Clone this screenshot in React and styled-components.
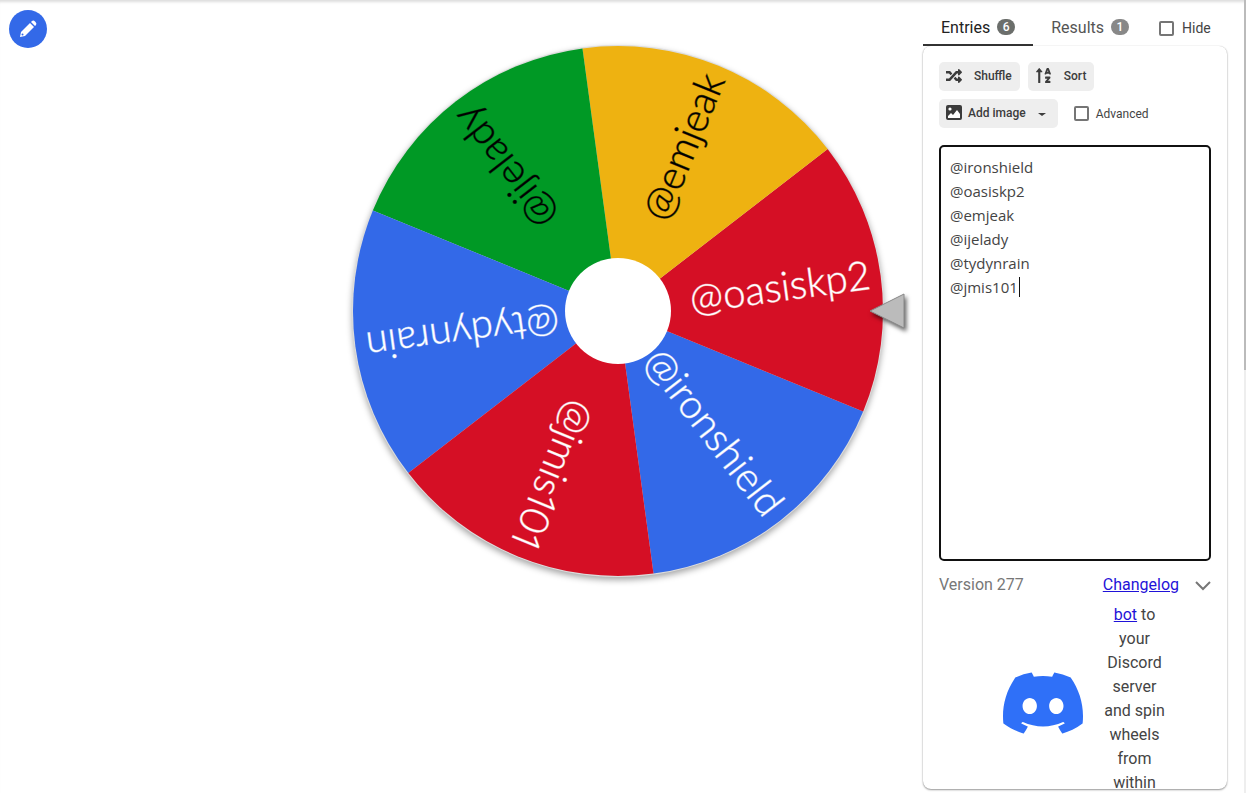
import React, { useEffect, useRef, useState } from "react";
import styled, { createGlobalStyle } from "styled-components";
import { FaRandom, FaSortAlphaUp } from "react-icons/fa";
import { SiDiscord } from "react-icons/si";

const GlobalStyle = createGlobalStyle`
    * {
        box-sizing: border-box;
    }

    body {
        margin: 0;
        background: #fff;
        color: #444;
        font-family: Roboto, sans-serif;
    }

    button,
    textarea {
        font-family: inherit;
    }
`;

const Page = styled.div`
    display: flex;
    height: 100vh;
    overflow: hidden;
    box-shadow: inset 0 4px 3px -2px #ddd;
`;

const Main = styled.main`
    flex: 1;
    display: grid;
    grid-template-columns: 314px 1fr 314px;
    padding-right: 8px;
`;

const ScrollRail = styled.div`
    width: 2px;
    background: linear-gradient(#bbb 0 370px, #eee 370px);
`;

const LeftColumn = styled.div`
    padding: 10px 9px;
`;

const EditButton = styled.button`
    display: flex;
    align-items: center;
    justify-content: center;
    width: 38px;
    height: 38px;
    padding: 0;
    border: 0;
    border-radius: 50%;
    background: #3369e8;
    color: #fff;
`;

const WheelColumn = styled.div`
    display: flex;
    justify-content: center;
    align-items: flex-start;
    padding: 11px 4px;
`;

const WheelSvg = styled.svg`
    width: 100%;
    max-width: 600px;

    .disc {
        filter: drop-shadow(0 3px 3px rgba(0, 0, 0, 0.35));
    }

    .pointer {
        fill: #bbb;
        stroke: #888;
        filter: drop-shadow(2px 3px 2px rgba(0, 0, 0, 0.6));
    }
`;

const SliceName = styled.text`
    fill: ${props => props.$color};
    stroke: ${props => props.$color};
    stroke-opacity: 0.5;
    font-family: Lato, sans-serif;
    font-weight: 300;
    font-size: 40px;
    font-variant-numeric: proportional-nums;
    text-anchor: end;
    dominant-baseline: middle;
`;

const Sidebar = styled.aside`
    display: flex;
    flex-direction: column;
    min-height: 0;
    height: 100vh;
    padding: 10px 9px 4px 1px;
`;

const TabBar = styled.div`
    display: flex;
    align-items: center;
    flex-shrink: 0;
    height: 36px;
`;

const Tab = styled.button`
    display: flex;
    align-items: center;
    gap: 7px;
    height: 36px;
    padding: 0 18px;
    border: 0;
    border-bottom: 2px solid ${props => (props.$active ? "#333" : "transparent")};
    background: none;
    color: ${props => (props.$active ? "#222" : "#555")};
    font-size: 16px;
    white-space: nowrap;
`;

const Badge = styled.span`
    width: 18px;
    border-radius: 8px;
    background: ${props => (props.$active ? "#6b6e6b" : "#888")};
    color: #fff;
    font-size: 12px;
    font-weight: 500;
    line-height: 16px;
    text-align: center;
`;

const CheckLabel = styled.label`
    display: flex;
    align-items: center;
    gap: ${props => (props.$small ? "7px" : "8px")};
    margin-left: ${props => (props.$small ? "8px" : "12px")};
    font-size: ${props => (props.$small ? "12px" : "14px")};
`;

const Checkbox = styled.input.attrs({ type: "checkbox" })`
    appearance: none;
    width: 15px;
    height: 15px;
    margin: 0;
    border: 2px solid #757575;
    border-radius: 2px;

    &:checked {
        background: #757575;
    }
`;

const Card = styled.section`
    flex: 1;
    display: flex;
    flex-direction: column;
    min-height: 0;
    padding: 16px 16px 0;
    border-radius: 8px;
    box-shadow: 0 1px 2px rgba(0, 0, 0, 0.4), 0 0 1px rgba(0, 0, 0, 0.2);
    overflow: hidden;
`;

const Tools = styled.div`
    display: flex;
    flex-wrap: wrap;
    gap: 8px;
    margin-bottom: 17px;
`;

const ToolButton = styled.button`
    display: flex;
    align-items: center;
    gap: ${props => (props.$menu ? "6px" : "12px")};
    height: 29px;
    padding: 0 8px 2px 7px;
    border: 0;
    border-radius: 5px;
    background: #eee;
    color: #3c3c3c;
    font-size: 12px;
    font-weight: 500;

    svg {
        flex-shrink: 0;
    }
`;

const Arrow = styled.span`
    margin: 3px 4px 0 6px;
    border: 4px solid transparent;
    border-top: 3px solid #3c3c3c;
    border-bottom: 0;
`;

const EntriesArea = styled.div`
    position: relative;
    flex-shrink: 0;
`;

const EntriesBox = styled.textarea`
    display: block;
    width: 100%;
    height: calc(100vh - 377px);
    min-height: 120px;
    padding: 8px 9px;
    border: 2px solid #111;
    border-radius: 5px;
    outline: 0;
    color: #444;
    caret-color: transparent;
    font-family: "Open Sans", sans-serif;
    font-size: 15px;
    line-height: 24px;
    resize: none;
`;

const TextCaret = styled.span`
    position: absolute;
    width: 1px;
    height: 20px;
    background: #111;
`;

const VersionRow = styled.div`
    display: flex;
    align-items: center;
    flex-shrink: 0;
    height: 42px;
    padding-top: 5px;
    color: #777;
`;

const Link = styled.a`
    color: #1f12d8;
`;

const ChangelogLink = styled(Link)`
    margin-left: auto;
`;

const ExpandButton = styled.button`
    display: flex;
    margin-left: 16px;
    padding: 2px 0 0;
    border: 0;
    background: none;
    color: #777;
`;

const Promo = styled.div`
    flex: 1;
    display: flex;
    justify-content: center;
    gap: 20px;
    min-height: 0;
    padding-left: 19px;
    overflow: hidden;
`;

const DiscordLogo = styled(SiDiscord)`
    flex-shrink: 0;
    width: 80px;
    height: 80px;
    margin-top: 60px;
    color: #2f70f8;
`;

const PromoText = styled.p`
    width: 64px;
    margin: 0;
    line-height: 24px;
    text-align: center;
`;

const names = ["@ironshield", "@oasiskp2", "@emjeak", "@ijelady", "@tydynrain", "@jmis101"];

const slices = [
    { color: "#3369e8", text: "#fff" },
    { color: "#d50f25", text: "#fff" },
    { color: "#eeb211", text: "#000" },
    { color: "#009925", text: "#000" },
    { color: "#3369e8", text: "#fff" },
    { color: "#d50f25", text: "#fff" }
];

const RADIUS = 265;
const START_ANGLE = 52.3;

function point(angle) {
    const rad = (angle * Math.PI) / 180;
    return `${RADIUS * Math.cos(rad)} ${RADIUS * Math.sin(rad)}`;
}

function Wheel({ entries }) {
    const step = 360 / entries.length;
    return (
        <WheelSvg viewBox="-300 -300 600 600" role="img" aria-label="Wheel">
            <g className="disc">
                <circle r="266" fill="#ddd" />
                {entries.map((name, i) => {
                    const mid = START_ANGLE - i * step;
                    return (
                        <path
                            key={i}
                            fill={slices[i % slices.length].color}
                            d={`M0 0L${point(mid - step / 2)}A${RADIUS} ${RADIUS} 0 0 1 ${point(mid + step / 2)}Z`}
                        />
                    );
                })}
            </g>
            {entries.map((name, i) => (
                <SliceName
                    key={i}
                    x="254"
                    y="2"
                    $color={slices[i % slices.length].text}
                    transform={`rotate(${START_ANGLE - i * step})`}
                >
                    {name}
                </SliceName>
            ))}
            <circle r="53" fill="#fff" />
            <path className="pointer" d="M252 0L286 -17V17Z" />
        </WheelSvg>
    );
}

function PencilIcon() {
    return (
        <svg width="20" height="20" viewBox="0 0 20 20" fill="currentColor" aria-hidden="true">
            <path d="M2 18L3 13L12 4L16 8L7 17Z" />
            <path d="M13 3L14 2Q15.5 1 17 2.500L17.500 3Q19 4.500 18 6L17 7Z" />
            <circle cx="4.500" cy="15.500" r="1" fill="#3369e8" />
        </svg>
    );
}

function ImageIcon() {
    return (
        <svg width="16" height="15" viewBox="0 0 16 15" aria-hidden="true">
            <rect width="16" height="15" rx="2" fill="currentColor" />
            <circle cx="4" cy="4" r="1.6" fill="#fff" />
            <path d="M2 13V11L5 8L7 10L11 5L14 9V13Z" fill="#fff" />
        </svg>
    );
}

export default function App() {
    const [text, setText] = useState(names.join("\n"));
    const [caret, setCaret] = useState({ left: 11, top: 12 });
    const box = useRef(null);

    useEffect(() => {
        box.current.focus();
        box.current.setSelectionRange(text.length, text.length);
    }, []);

    // put the caret after the last typed line
    useEffect(() => {
        const lines = text.split("\n");
        const ctx = document.createElement("canvas").getContext("2d");
        ctx.font = '15px "Open Sans", sans-serif';
        setCaret({
            left: 12 + Math.round(ctx.measureText(lines[lines.length - 1]).width),
            top: 12 + (lines.length - 1) * 24
        });
    }, [text]);

    const entries = text.split("\n").filter(Boolean);

    return (
        <Page>
            <GlobalStyle />
            <Main>
                <LeftColumn>
                    <EditButton aria-label="Edit title">
                        <PencilIcon />
                    </EditButton>
                </LeftColumn>
                <WheelColumn>
                    <Wheel entries={entries} />
                </WheelColumn>
                <Sidebar>
                    <TabBar>
                        <Tab $active>
                            Entries <Badge $active>{entries.length}</Badge>
                        </Tab>
                        <Tab>
                            Results <Badge>1</Badge>
                        </Tab>
                        <CheckLabel>
                            <Checkbox /> Hide
                        </CheckLabel>
                    </TabBar>
                    <Card>
                        <Tools>
                            <ToolButton>
                                <FaRandom size={16} /> Shuffle
                            </ToolButton>
                            <ToolButton>
                                <FaSortAlphaUp size={17} /> Sort
                            </ToolButton>
                            <ToolButton $menu>
                                <ImageIcon /> Add image <Arrow />
                            </ToolButton>
                            <CheckLabel $small>
                                <Checkbox /> Advanced
                            </CheckLabel>
                        </Tools>
                        <EntriesArea>
                            <EntriesBox
                                ref={box}
                                aria-label="Entries"
                                spellCheck={false}
                                value={text}
                                onChange={e => setText(e.target.value)}
                            />
                            <TextCaret style={caret} />
                        </EntriesArea>
                        <VersionRow>
                            Version 277
                            <ChangelogLink href="#changelog">Changelog</ChangelogLink>
                            <ExpandButton aria-label="Expand">
                                <svg width="16" height="10" viewBox="0 0 16 10" fill="none" stroke="currentColor" strokeWidth="2">
                                    <path d="M1 1L8 8L15 1" />
                                </svg>
                            </ExpandButton>
                        </VersionRow>
                        <Promo>
                            <DiscordLogo />
                            <PromoText>
                                <Link href="#bot">bot</Link> to your Discord server and spin wheels from within
                            </PromoText>
                        </Promo>
                    </Card>
                </Sidebar>
            </Main>
            <ScrollRail />
        </Page>
    );
}
